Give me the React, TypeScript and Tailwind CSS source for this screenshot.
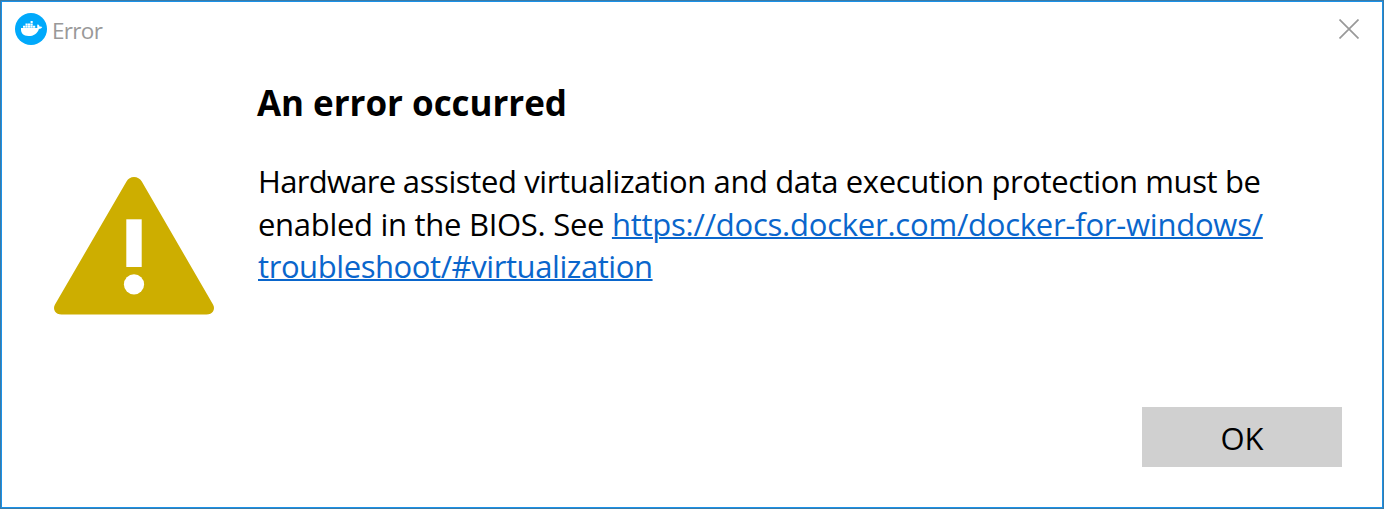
function DockerIcon() {
  return (
    <svg width="32" height="32" viewBox="0 0 32 32" className="shrink-0">
      <circle cx="16" cy="16" r="16" fill="#00a9fb" />
      <g fill="#fff">
        <path d="M15.6 8h2.1v2.1h-2.1zM10.5 10.4h2.2v2.1h-2.2zM13 10.4h2.3v2.1H13zM15.6 10.4h2.1v2.1h-2.1zM8 12.8h2.2v2H8zM10.5 12.8h2.2v2h-2.2zM13 12.8h2.3v2H13zM15.6 12.8h2.1v2h-2.1zM18 12.8h2.2v2H18z" />
        <path d="M6 15.1h14.6c1 0 1.6-.3 1.9-.7-.6-1-.4-2.3.3-3.1 1 .5 1.6 1.3 1.7 2.3 1.1-.2 2.1 0 2.8.5-.6 1.3-1.9 1.9-3.4 1.9C22.400 20.700 18.800 23.100 13.500 23.100 8.300 23.100 5.600 20.200 6 15.100z" />
      </g>
    </svg>
  );
}

function WarningIcon() {
  return (
    <svg width="160" height="138" viewBox="0 0 160 138" className="shrink-0">
      <path
        d="M72.500 4.500Q75 0 80 0Q85 0 87.800 4.500L159 127.500Q161 131 159 134.500Q157 137.500 152.500 137.500H7.500Q3 137.500 1 134.500Q-1 131 1 127.500Z"
        fill="#cdae00"
      />
      <rect x="72.300" y="42.300" width="15.400" height="47.700" fill="#fff" />
      <circle cx="80" cy="107.400" r="10.100" fill="#fff" />
    </svg>
  );
}

export default function App() {
  return (
    <div className="h-[509px] w-[1384px] border border-[#3a7ba7] bg-white font-['Open_Sans',sans-serif] text-black">
      <div className="flex h-full flex-col border border-[#1a91e8]">
        <header className="flex h-[54px] items-center justify-between pr-[23px] pl-[13px]">
          <div className="flex items-center gap-[5px]">
            <DockerIcon />
            <span className="pt-[3px] text-[22.500px] leading-8 tracking-[-0.7px] text-[#999]">Error</span>
          </div>
          <button aria-label="Close">
            <svg width="20" height="20" viewBox="0 0 20 20" stroke="#999" strokeWidth="1.700">
              <path d="M.5.5l19 19M19.500.5l-19 19" />
            </svg>
          </button>
        </header>
        <main className="flex flex-1 pl-[52px]">
          <div className="w-[204px] pt-[121px]">
            <WarningIcon />
          </div>
          <div className="pt-[22px] whitespace-nowrap">
            <h1 className="-ml-px text-[35px] leading-[50px] font-bold tracking-[-0.040px]">An error occurred</h1>
            <p className="pt-[32px] text-[31px] leading-[42.500px]">
              <span className="tracking-[-0.7px]">Hardware </span>
              <span className="tracking-[-0.390px]">assisted virtualization and data execution protection must be</span>
              <br />
              <span className="tracking-[-0.290px]">enabled in the BIOS. See </span>
              <a className="text-[#0a66cc] underline decoration-2">
                <span className="tracking-[-0.230px]">https://docs.docker.com/docker-for-windows/</span>
                <br />
                <span className="tracking-[-0.420px]">troubleshoot/#virtualization</span>
              </a>
            </p>
          </div>
        </main>
        <footer className="flex justify-end pr-[40px] pb-[40px]">
          <button className="h-[60px] w-[200px] bg-[#d0d0d0] pt-[3px] text-[31px]">OK</button>
        </footer>
      </div>
    </div>
  );
}
